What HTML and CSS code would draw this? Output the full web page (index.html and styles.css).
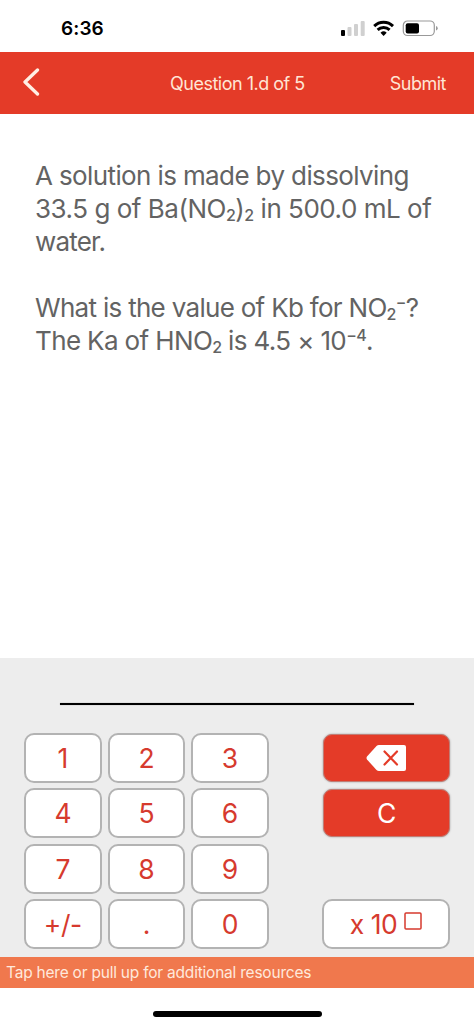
FILE: index.html
```html
<!DOCTYPE html>
<html lang="en">
<head>
<meta charset="utf-8">
<title>Question 1.d of 5</title>
<link rel="stylesheet" href="styles.css">
</head>
<body>
<div class="screen">
  <div class="status">
    <span class="time">6:36</span>
    <svg class="status-icons" width="98" height="18" viewBox="0 0 98 18">
      <g fill="#d0d0d0"><rect x="7.5" y="7" width="4" height="9" rx="1"/><rect x="14" y="4" width="4" height="12" rx="1"/><rect x="20.7" y="1" width="4" height="15" rx="1"/></g>
      <rect x="1" y="10" width="4" height="6" rx="1" fill="#000"/>
      <g fill="none" stroke="#000" stroke-width="2.9"><path d="M34.2 6.1a13.4 13.4 0 0 1 18.8 0"/><path d="M37.6 9.9a8.7 8.7 0 0 1 12 0"/></g>
      <path d="M43.6 15.9l-3.1-3.1a4.5 4.5 0 0 1 6.2 0z" fill="#000"/>
      <rect x="63.3" y="1" width="31" height="14.5" rx="4.2" fill="#fff" stroke="#999" stroke-width="1.2"/>
      <rect x="65.7" y="3.2" width="13.3" height="10.2" rx="2" fill="#000"/>
      <path d="M96 6v4.5q1.7-.5 1.7-2.2T96 6z" fill="#999"/>
    </svg>
  </div>
  <header class="nav">
    <svg class="back" width="18" height="28" viewBox="0 0 18 28"><path d="M15.500 2L3 14 15.500 26" fill="none" stroke="#ffefe4" stroke-width="3.3" stroke-linecap="round" stroke-linejoin="round"/></svg>
    <span class="title">Question 1.d of 5</span>
    <span class="submit">Submit</span>
  </header>
  <main class="question">
    <p><span class="l1">A solution is made by dissolving</span><br><span class="l2">33.5 g of Ba(NO<sub>2</sub>)<sub>2</sub> in 500.0 mL of</span><br><span class="l3">water.</span></p>
    <p><span class="l4">What is the value of Kb for NO<sub>2</sub><sup>−</sup>?</span><br><span class="l5">The Ka of HNO<sub>2</sub> is 4.5 × 10<sup>−4</sup>.</span></p>
  </main>
  <section class="pad">
    <div class="answer"></div>
    <div class="keys">
      <div class="digits">
        <button class="key">1</button><button class="key">2</button><button class="key">3</button>
        <button class="key">4</button><button class="key">5</button><button class="key">6</button>
        <button class="key">7</button><button class="key">8</button><button class="key">9</button>
        <button class="key">+/-</button><button class="key">.</button><button class="key">0</button>
      </div>
      <div class="actions">
        <button class="key red" aria-label="Delete"><svg width="40" height="26" viewBox="0 0 40 26"><path d="M13 0H38Q40 0 40 2V24Q40 26 38 26H13Q11.500 26 10.500 25L1 14.500Q0 13 1 11.500L10.500 1Q11.500 0 13 0z" fill="#fff"/><path d="M18.500 6.500L31 19.500M31 6.500L18.500 19.500" stroke="#e43b28" stroke-width="2.200" stroke-linecap="round"/></svg></button>
        <button class="key red">C</button>
        <button class="key power">x 10<svg class="box" width="18" height="18" viewBox="0 0 18 18"><rect x="1" y="1" width="16" height="16" rx="1" fill="none" stroke="#d63a2e" stroke-width="1.500"/></svg></button>
      </div>
    </div>
  </section>
  <div class="resources"><span>Tap here or pull up for additional resources</span></div>
  <div class="home"><div class="home-bar"></div></div>
</div>
</body>
</html>
```
FILE: styles.css
```css
* { box-sizing: border-box; }
body { margin: 0; background: #fff; font-family: Inter, "Liberation Sans", sans-serif; }
.screen { width: 474px; height: 1026px; display: flex; flex-direction: column; overflow: hidden; }
.status { height: 52px; padding: 20px 36px 0 61px; display: flex; justify-content: space-between; align-items: flex-start; }
.time { font-size: 19px; line-height: 18px; font-weight: 600; letter-spacing: 0.1px; }
.nav { height: 62px; background: #e43b28; color: #ffe5d5; display: grid; grid-template-columns: 170px 1fr auto; align-items: center; padding: 0 28px 0 0; font-size: 18px; letter-spacing: -0.5px; }
.back { margin-left: 22px; margin-top: -2px; }
.question { height: 544px; padding: 46px 0 0 35px; color: #636363; font-size: 26px; line-height: 32.9px; white-space: nowrap; }
.question p { margin: 0 0 32.9px; }
.l1 { letter-spacing: -0.62px; }
.l2 { letter-spacing: -0.48px; }
.l3 { letter-spacing: -0.8px; }
.l4 { letter-spacing: -0.7px; }
.l5 { letter-spacing: -0.63px; }
sub, sup { font-size: 16px; font-weight: 500; line-height: 0; }
sub { vertical-align: -3px; }
sup { vertical-align: 9px; }
.pad { height: 299px; background: #ededed; padding: 45px 24px 0; }
.answer { height: 2px; margin: 0 36px 28px; background: #000; box-shadow: 0 0 1px rgba(0, 0, 0, 0.5); }
.keys { display: flex; justify-content: space-between; }
.digits { display: grid; grid-template-columns: repeat(3, 77.5px); grid-auto-rows: 50px; column-gap: 6px; row-gap: 5.4px; }
.actions { width: 128px; display: grid; grid-template-rows: repeat(4, 50px); row-gap: 5.4px; }
.key { display: flex; align-items: center; justify-content: center; padding: 0; border: 2px solid #b3b3b3; border-radius: 10px; background: #fff; color: #d63a2e; font: 26.5px Inter, "Liberation Sans", sans-serif; letter-spacing: -0.5px; }
.red { background: #e43b28; color: #fff; border: 1px solid #c27c74; border-radius: 9px; box-shadow: 0 0 2px #999; margin: 1px 0 1px 1px; }
.red svg { margin-left: -1px; }
.power { grid-row: 4; }
.box { margin: -6px 0 0 7px; }
.resources { height: 31px; background: #f0784d; color: #ffe9dc; padding-left: 6px; font-size: 15.5px; letter-spacing: -0.22px; line-height: 31px; white-space: nowrap; }
.home { flex: 1; display: flex; justify-content: center; padding-top: 23px; }
.home-bar { width: 169px; height: 6px; border-radius: 3px; background: #000; }
```
